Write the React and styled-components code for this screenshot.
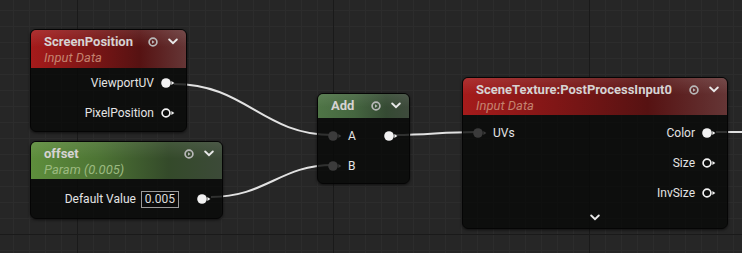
import styled, { createGlobalStyle } from 'styled-components'

const GlobalStyle = createGlobalStyle`
  html, body {
    margin: 0;
    padding: 0;
    background: #262626;
  }

  body {
    font-family: Roboto, "Liberation Sans", sans-serif;
  }
`

const Canvas = styled.div`
  position: relative;
  overflow: hidden;
  width: 742px;
  height: 253px;

  background-color: #262626;
  background-image:
    linear-gradient(to right, #1a1a1a 1px, transparent 1px),
    linear-gradient(to bottom, #1a1a1a 1px, transparent 1px),
    linear-gradient(to right, #2c2c2c 1px, transparent 1px),
    linear-gradient(to bottom, #2c2c2c 1px, transparent 1px);
  background-size: 256px 100%, 100% 256px, 16px 16px, 16px 16px;
  background-position: 77px 0, 0 234px, 13px 0, 0 10px;
`

const Wires = styled.svg`
  position: absolute;
  inset: 0;
  width: 742px;
  height: 253px;
`

const Node = styled.div`
  position: absolute;
  display: flex;
  flex-direction: column;
  overflow: hidden;

  border: 1px solid #050505;
  border-radius: 6px;
  background: rgba(9, 10, 9, 0.82);
  box-shadow: 0 1px 3px rgba(0, 0, 0, 0.6);
`

const headerBg = {
  red: `
    linear-gradient(to bottom, rgba(255, 255, 255, 0.1), rgba(255, 255, 255, 0) 45%),
    linear-gradient(to right, #a51b1b 0%, #801616 35%, #561212 70%, #653636 100%)
  `,
  green: `
    linear-gradient(to bottom, rgba(255, 255, 255, 0.08), rgba(255, 255, 255, 0) 45%),
    linear-gradient(to right, #5e8e3c 0%, #4d7434 35%, #344a2a 72%, #3c4a38 100%)
  `,
  greenGrey: `
    linear-gradient(to bottom, rgba(255, 255, 255, 0.08), rgba(255, 255, 255, 0) 55%),
    linear-gradient(to right, #4f7546 0%, #456640 40%, #354a33 75%, #3e4a3c 100%)
  `,
}

const Header = styled.div`
  display: flex;
  flex-direction: column;
  height: ${({ $height }) => $height}px;
  padding: 3px 0 0 13px;
  box-sizing: border-box;
  background: ${({ $tint }) => headerBg[$tint]};
`

const TitleRow = styled.div`
  display: flex;
  align-items: center;
  height: 17px;
`

const Title = styled.span`
  flex: 1;
  color: #d6d3d3;
  font-size: 13px;
  font-weight: 700;
  white-space: nowrap;
`

const Subtitle = styled.span`
  color: ${({ $tint }) => ($tint === 'red' ? '#c4826f' : '#9cba80')};
  font-size: 13px;
  font-style: italic;
  line-height: 15px;
`

const HeaderIcons = styled.div`
  display: flex;
  align-items: center;
  gap: 10px;
  padding-right: 8px;
`

const Body = styled.div`
  display: flex;
  flex-direction: column;
  padding: ${({ $pad }) => $pad};
`

const Row = styled.div`
  display: flex;
  align-items: center;
  justify-content: space-between;
  height: 30px;
`

const Side = styled.div`
  display: flex;
  align-items: center;
  gap: ${({ $gap }) => $gap}px;
  padding: ${({ $out }) => ($out ? '0 11px 0 0' : '0 0 0 10px')};
  margin-left: ${({ $out }) => ($out ? 'auto' : '0')};
`

const Label = styled.span`
  color: #e4e4e4;
  font-size: 12px;
  white-space: nowrap;
`

const ValueBox = styled.span`
  display: inline-flex;
  align-items: center;
  height: 17px;
  padding: 0 3px;
  margin-right: 13px;
  border: 1px solid #9a9a9a;
  background: #0b0b0b;
  color: #dcdcdc;
  font-size: 12px;
  box-sizing: border-box;
`

const Expand = styled.div`
  display: flex;
  justify-content: center;
  align-items: center;
  height: 18px;
`

const PlayIcon = () => (
  <svg width="10" height="10" viewBox="0 0 10 10">
    <circle cx="5" cy="5" r="3.9" fill="none" stroke="#b8b8b8" strokeWidth="1.7" />
    <path d="M4 3.2 L6.6 5 L4 6.8 Z" fill="#b8b8b8" />
  </svg>
)

const Chevron = ({ color = '#e8e8e8' }) => (
  <svg width="10" height="7" viewBox="0 0 10 7">
    <path d="M1.2 1.5 L5 5.2 L8.8 1.5" fill="none" stroke={color} strokeWidth="1.9" strokeLinecap="round" />
  </svg>
)

// kind: filled | hollow | empty
const Pin = ({ kind }) => {
  const white = '#f2f2f2'
  const grey = '#3b3b3b'
  const arrow = kind === 'empty' ? grey : white

  return (
    <svg width="14" height="10" viewBox="0 0 14 10">
      {kind === 'hollow' ? (
        <circle cx="5" cy="5" r="3.9" fill="none" stroke={white} strokeWidth="1.7" />
      ) : (
        <circle cx="5" cy="5" r="4.8" fill={kind === 'empty' ? grey : white} />
      )}
      <path d="M10.4 2.9 L13.4 5 L10.4 7.1 Z" fill={arrow} />
    </svg>
  )
}

const NodeHeader = ({ tint, title, subtitle, height }) => (
  <Header $tint={tint} $height={height}>
    <TitleRow>
      <Title>{title}</Title>
      <HeaderIcons>
        <PlayIcon />
        <Chevron />
      </HeaderIcons>
    </TitleRow>
    {subtitle && <Subtitle $tint={tint}>{subtitle}</Subtitle>}
  </Header>
)

const wires = [
  'M174 84 C 246 84, 262 135, 333 135',
  'M211 197 C 266 197, 280 165, 333 165',
  'M395 135 C 430 135, 440 132, 477 132',
  'M716 132 L 760 132',
]

const App = () => (
  <>
    <GlobalStyle />
    <Canvas>
      <Wires viewBox="0 0 742 253">
        {wires.map((d) => (
          <path key={d} d={d} fill="none" stroke="#e2e2e2" strokeWidth="2" />
        ))}
      </Wires>

      <Node style={{ left: 30, top: 29, width: 155, height: 101 }}>
        <NodeHeader tint="red" title="ScreenPosition" subtitle="Input Data" height={38} />
        <Body $pad="0">
          <Row>
            <Side $out $gap={7}>
              <Label>ViewportUV</Label>
              <Pin kind="filled" />
            </Side>
          </Row>
          <Row>
            <Side $out $gap={7}>
              <Label>PixelPosition</Label>
              <Pin kind="hollow" />
            </Side>
          </Row>
        </Body>
      </Node>

      <Node style={{ left: 30, top: 141, width: 191, height: 76 }}>
        <NodeHeader tint="green" title="offset" subtitle="Param (0.005)" height={37} />
        <Body $pad="5px 0 0">
          <Row>
            <Side $out $gap={5}>
              <Label>Default Value</Label>
              <ValueBox>0.005</ValueBox>
              <Pin kind="filled" />
            </Side>
          </Row>
        </Body>
      </Node>

      <Node style={{ left: 317, top: 93, width: 91, height: 89 }}>
        <NodeHeader tint="greenGrey" title="Add" height={24} />
        <Body $pad="3px 0 0">
          <Row>
            <Side $gap={6}>
              <Pin kind="empty" />
              <Label>A</Label>
            </Side>
            <Side $out>
              <Pin kind="filled" />
            </Side>
          </Row>
          <Row>
            <Side $gap={6}>
              <Pin kind="empty" />
              <Label>B</Label>
            </Side>
          </Row>
        </Body>
      </Node>

      <Node style={{ left: 462, top: 77, width: 264, height: 150 }}>
        <NodeHeader tint="red" title="SceneTexture:PostProcessInput0" subtitle="Input Data" height={37} />
        <Body $pad="3px 0 0">
          <Row>
            <Side $gap={6}>
              <Pin kind="empty" />
              <Label>UVs</Label>
            </Side>
            <Side $out $gap={7}>
              <Label>Color</Label>
              <Pin kind="filled" />
            </Side>
          </Row>
          <Row>
            <Side $out $gap={7}>
              <Label>Size</Label>
              <Pin kind="hollow" />
            </Side>
          </Row>
          <Row>
            <Side $out $gap={7}>
              <Label>InvSize</Label>
              <Pin kind="hollow" />
            </Side>
          </Row>
          <Expand>
            <Chevron />
          </Expand>
        </Body>
      </Node>
    </Canvas>
  </>
)

export default App
